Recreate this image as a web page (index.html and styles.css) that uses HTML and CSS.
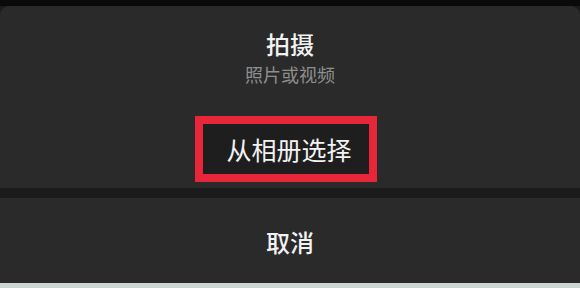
FILE: index.html
```html
<!DOCTYPE html>
<html lang="zh-CN">
<head>
<meta charset="utf-8">
<link rel="stylesheet" href="styles.css">
</head>
<body>
<div class="sheet">
  <div class="top-strip"></div>
  <div class="card main">
    <div class="option camera">
      <div class="title">拍摄</div>
      <div class="subtitle">照片或视频</div>
    </div>
    <div class="option album">
      <div class="highlight">
        <span class="title">从相册选择</span>
      </div>
    </div>
  </div>
  <div class="card cancel">
    <div class="title">取消</div>
  </div>
  <div class="bottom-strip"></div>
</div>
</body>
</html>
```

FILE: styles.css
```css
* { box-sizing: border-box; }
html, body {
  margin: 0;
  padding: 0;
  width: 580px;
  height: 288px;
  overflow: hidden;
  background: #1b1b1b;
  font-family: "Noto Sans CJK SC", "Noto Sans", sans-serif;
}
.sheet {
  display: flex;
  flex-direction: column;
  height: 288px;
}
.top-strip {
  height: 6px;
  background: #0a0a0a;
}
.card {
  background: #2a2a2a;
}
.main {
  height: 182px;
  border-radius: 9px 9px 0 0;
  display: flex;
  flex-direction: column;
}
.title {
  color: #f2f2f2;
  font-size: 24px;
  line-height: 28px;
  font-weight: 500;
  text-align: center;
}
.camera {
  height: 100px;
  padding-top: 24px;
}
.subtitle {
  margin-top: 6px;
  color: #8e8e8e;
  font-size: 18px;
  line-height: 20px;
  text-align: center;
}
.album {
  flex: 1;
  display: flex;
  justify-content: center;
  padding-top: 10px;
}
.highlight {
  width: 182px;
  height: 66px;
  margin-right: 8px;
  border: 8px solid #e8263a;
  background: #1e1e1f;
  display: flex;
  align-items: center;
  justify-content: center;
}
.highlight .title {
  display: block;
  font-size: 25px;
  font-weight: 400;
  padding-left: 6px;
}
.cancel {
  margin-top: 10px;
  height: 85px;
  display: flex;
  align-items: center;
  justify-content: center;
  padding-top: 3px;
}
.bottom-strip {
  height: 5px;
  background: #cdd5d5;
}
```
